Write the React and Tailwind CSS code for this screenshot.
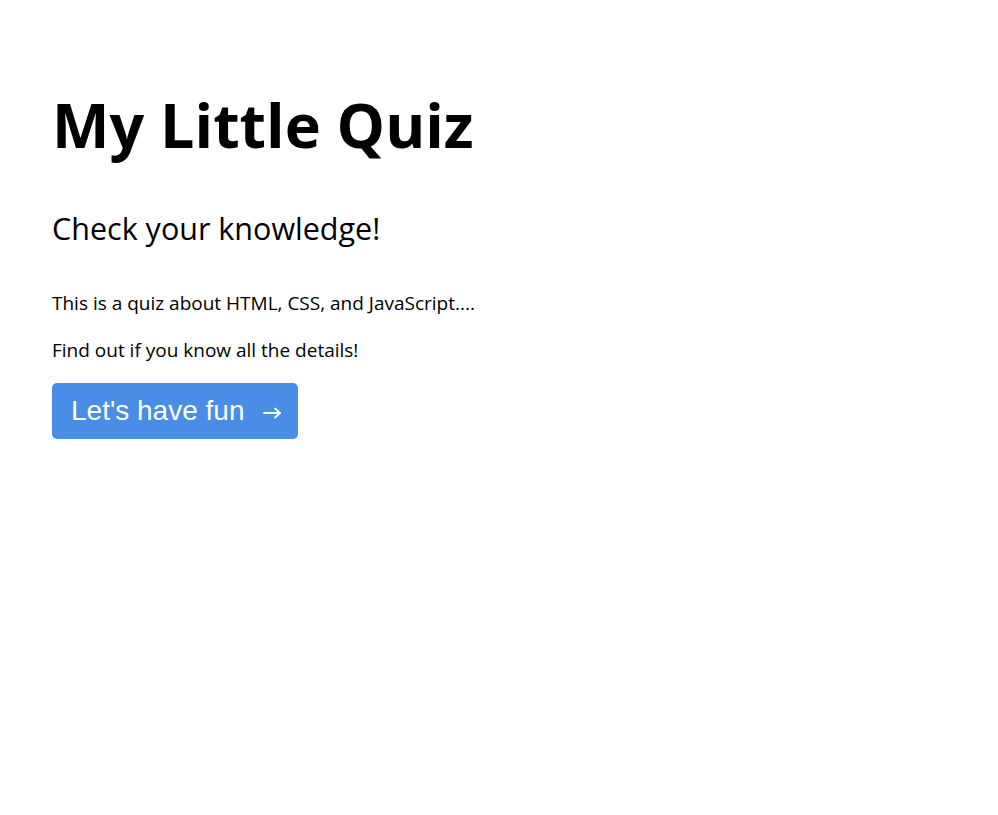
export default function App() {
  return (
    <div className="min-h-screen bg-white px-[52px] pt-[88px] text-black">
      <div className="font-['Open_Sans',sans-serif]">
        <h1 className="text-[61px] font-bold leading-[1.2]">My Little Quiz</h1>
        <h2 className="mt-[48px] text-[30.5px] leading-[1.3]">Check your knowledge!</h2>
        <p className="mt-[41px] text-[19px] leading-[1.4]">This is a quiz about HTML, CSS, and JavaScript....</p>
        <p className="mt-[21px] text-[19px] leading-[1.4]">Find out if you know all the details!</p>
        <button className="mt-[19px] flex h-[56px] w-[246px] items-center rounded-[5px] bg-[#4a8de6] pl-[19px] font-['Liberation_Sans',Arial,sans-serif] text-[28px] text-white">
          <span>Let's have fun</span>
          <svg className="ml-[19px] mt-[3px]" width="18" height="12" viewBox="0 0 18 12" fill="none" stroke="white" strokeWidth="1.8" strokeLinecap="round" strokeLinejoin="round">
            <path d="M1 6h16" />
            <path d="M12 1.5l5 4.5-5 4.5" />
          </svg>
        </button>
      </div>
    </div>
  );
}
